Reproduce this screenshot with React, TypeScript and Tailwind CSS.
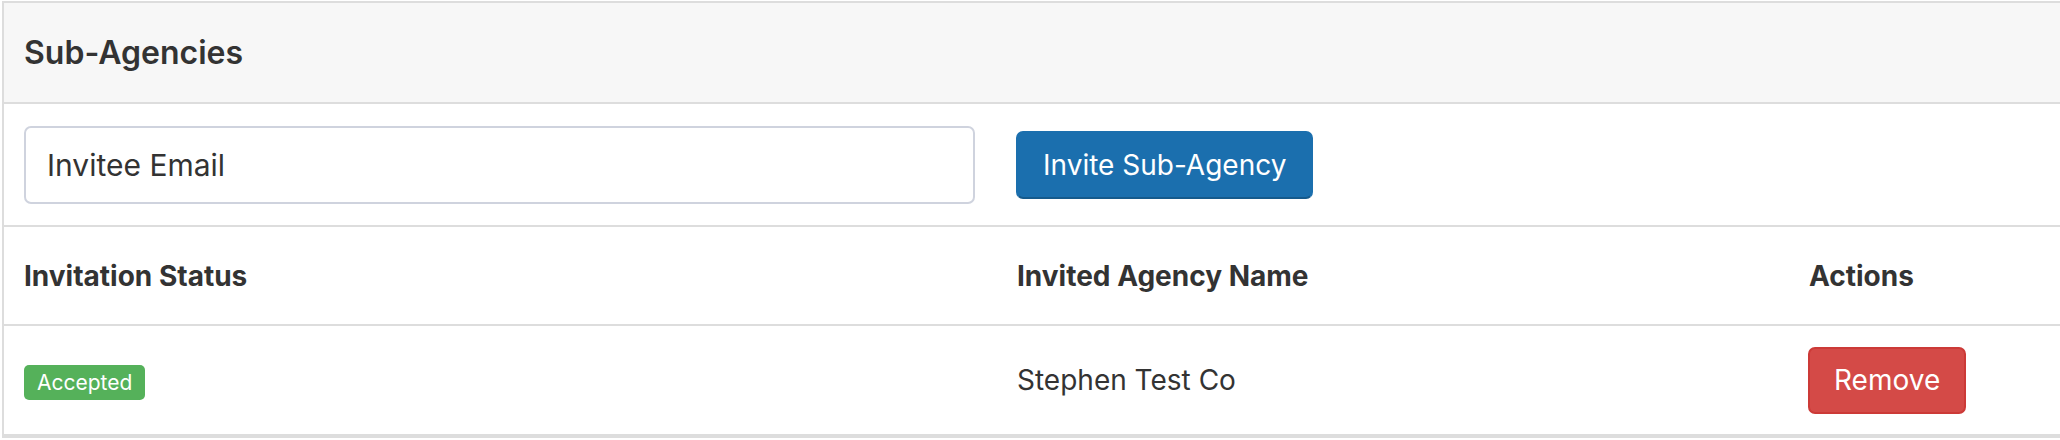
import React from "react";

const font = { fontFamily: "Inter, 'Noto Sans', sans-serif" };

export default function App() {
  return (
    <div className="bg-white w-[2060px] h-[440px] overflow-hidden pt-px pl-[2px] text-[#333]" style={font}>
      <div className="w-[2100px] border-2 border-[#dddddd] border-r-0">
        <div className="h-[101px] bg-[#f7f7f7] border-b-2 border-[#dddddd] flex items-center px-5">
          <h3 className="text-[32px] font-semibold leading-none text-[#333]">Sub-Agencies</h3>
        </div>

        <div className="h-[123px] border-b-2 border-[#dddddd] flex items-start pt-[22px] px-5">
          <div className="w-[951px] h-[78px] border-2 border-[#cfd3de] rounded-[7px] flex items-center pl-[21px]">
            <span className="text-[30px] text-[#333]">Invitee Email</span>
          </div>
          <button className="ml-[41px] mt-[5px] h-[68px] px-[25px] rounded-[7px] bg-[#1b6fae] border-2 border-[#1b6fae] border-b-[#155a8c] text-white text-[28px]">
            Invite Sub-Agency
          </button>
        </div>

        <div className="grid grid-cols-[993px_792px_1fr] h-[99px] border-b-2 border-[#dddddd] items-center text-[28px] font-bold">
          <div className="pl-5">Invitation Status</div>
          <div className="pl-5">Invited Agency Name</div>
          <div className="pl-5">Actions</div>
        </div>

        <div className="grid grid-cols-[993px_792px_1fr] h-[110px] border-b-2 border-[#dddddd] items-center text-[28px]">
          <div className="pl-5">
            <span className="inline-flex items-center h-[35px] px-[13px] rounded-[5px] bg-[#55b15a] text-white text-[21px]">
              Accepted
            </span>
          </div>
          <div className="pl-5">Stephen Test Co</div>
          <div className="pl-[19px]">
            <button className="h-[67px] px-[24px] rounded-[7px] bg-[#d44a47] border-2 border-[#cc3a37] text-white text-[28px]">
              Remove
            </button>
          </div>
        </div>
      </div>
    </div>
  );
}
